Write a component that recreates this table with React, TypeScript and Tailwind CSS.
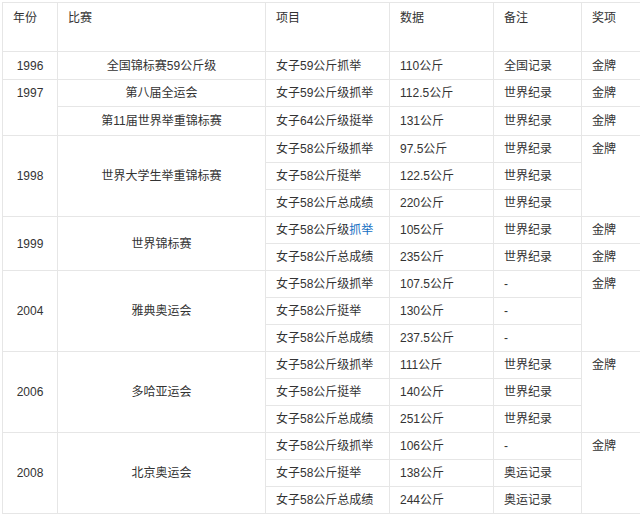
import React from "react";

// One row of the results table. Cells that span rows are only set on the first row.
interface Row {
  year?: { text: string; span: number; top?: boolean };
  event?: { text: string; span: number };
  item: React.ReactNode;
  data: string;
  note: string;
  medal?: { text: string; span: number };
  tall?: string;
}

const rows: Row[] = [
  { year: { text: "1996", span: 1 }, event: { text: "全国锦标赛59公斤级", span: 1 }, item: "女子59公斤抓举", data: "110公斤", note: "全国记录", medal: { text: "金牌", span: 1 }, tall: "h-[28px]" },
  { year: { text: "1997", span: 2, top: true }, event: { text: "第八届全运会", span: 1 }, item: "女子59公斤级抓举", data: "112.5公斤", note: "世界纪录", medal: { text: "金牌", span: 1 } },
  { event: { text: "第11届世界举重锦标赛", span: 1 }, item: "女子64公斤级挺举", data: "131公斤", note: "世界纪录", medal: { text: "金牌", span: 1 }, tall: "h-[29px]" },
  { year: { text: "1998", span: 3 }, event: { text: "世界大学生举重锦标赛", span: 3 }, item: "女子58公斤级抓举", data: "97.5公斤", note: "世界纪录", medal: { text: "金牌", span: 3 } },
  { item: "女子58公斤挺举", data: "122.5公斤", note: "世界纪录" },
  { item: "女子58公斤总成绩", data: "220公斤", note: "世界纪录" },
  {
    year: { text: "1999", span: 2 },
    event: { text: "世界锦标赛", span: 2 },
    item: (
      <>
        女子58公斤级<span className="text-[#136ec2]">抓举</span>
      </>
    ),
    data: "105公斤",
    note: "世界纪录",
    medal: { text: "金牌", span: 1 },
  },
  { item: "女子58公斤总成绩", data: "235公斤", note: "世界纪录", medal: { text: "金牌", span: 1 } },
  { year: { text: "2004", span: 3 }, event: { text: "雅典奥运会", span: 3 }, item: "女子58公斤级抓举", data: "107.5公斤", note: "-", medal: { text: "金牌", span: 3 } },
  { item: "女子58公斤挺举", data: "130公斤", note: "-" },
  { item: "女子58公斤总成绩", data: "237.5公斤", note: "-" },
  { year: { text: "2006", span: 3 }, event: { text: "多哈亚运会", span: 3 }, item: "女子58公斤级抓举", data: "111公斤", note: "世界纪录", medal: { text: "金牌", span: 3 } },
  { item: "女子58公斤挺举", data: "140公斤", note: "世界纪录" },
  { item: "女子58公斤总成绩", data: "251公斤", note: "世界纪录" },
  { year: { text: "2008", span: 3 }, event: { text: "北京奥运会", span: 3 }, item: "女子58公斤级抓举", data: "106公斤", note: "-", medal: { text: "金牌", span: 3 } },
  { item: "女子58公斤挺举", data: "138公斤", note: "奥运记录" },
  { item: "女子58公斤总成绩", data: "244公斤", note: "奥运记录" },
];

const cell = "border border-[#e6e6e6] px-[10px] py-0 h-[27px] whitespace-nowrap";
const head = "border border-[#e6e6e6] px-[10px] pt-[6px] h-[49px] align-top text-left font-normal";

const App = () => {
  return (
    <div className="w-[640px] h-[515px] overflow-hidden bg-white">
      <div className="pt-[2px] pl-[2px]">
        <table
          className="table-fixed border-collapse w-[700px] text-[12px] leading-[18px] text-[#333]"
          style={{ fontFamily: '"Liberation Sans", Arial, "Noto Sans CJK SC", sans-serif' }}
        >
          <colgroup>
            <col className="w-[55px]" />
            <col className="w-[208px]" />
            <col className="w-[124px]" />
            <col className="w-[104px]" />
            <col className="w-[88px]" />
            <col className="w-[121px]" />
          </colgroup>
          <thead>
            <tr>
              <th className={head}>年份</th>
              <th className={head}>比赛</th>
              <th className={head}>项目</th>
              <th className={head}>数据</th>
              <th className={head}>备注</th>
              <th className={head}>奖项</th>
            </tr>
          </thead>
          <tbody>
            {rows.map((row, index) => (
              <tr key={index} className={row.tall}>
                {row.year && (
                  <td
                    rowSpan={row.year.span}
                    className={cell + " text-center " + (row.year.top ? "align-top pt-[4px]" : "align-middle")}
                  >
                    {row.year.text}
                  </td>
                )}
                {row.event && (
                  <td rowSpan={row.event.span} className={cell + " text-center align-middle"}>
                    {row.event.text}
                  </td>
                )}
                <td className={cell}>{row.item}</td>
                <td className={cell}>{row.data}</td>
                <td className={cell}>{row.note}</td>
                {row.medal && (
                  <td
                    rowSpan={row.medal.span}
                    className={cell + (row.medal.span > 1 ? " align-top pt-[4px]" : " align-middle")}
                  >
                    {row.medal.text}
                  </td>
                )}
              </tr>
            ))}
          </tbody>
        </table>
      </div>
    </div>
  );
};

export default App;
